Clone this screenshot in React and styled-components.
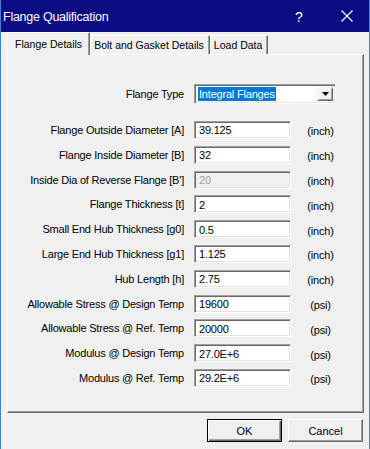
import React from 'react'
import styled, {createGlobalStyle} from 'styled-components'

const GlobalStyle = createGlobalStyle`
  html, body {
    margin: 0;
    padding: 0;
    background: #f0f0f0;
  }
  body {
    font-family: "Liberation Sans", Arial, sans-serif;
    font-size: 11px;
    color: #000;
  }
`

const FIELDS = [
  {label: 'Flange Outside Diameter [A]', value: '39.125', unit: '(inch)'},
  {label: 'Flange Inside Diameter [B]', value: '32', unit: '(inch)'},
  {label: "Inside Dia of Reverse Flange [B']", value: '20', unit: '(inch)', disabled: true},
  {label: 'Flange Thickness [t]', value: '2', unit: '(inch)'},
  {label: 'Small End Hub Thickness [g0]', value: '0.5', unit: '(inch)'},
  {label: 'Large End Hub Thickness [g1]', value: '1.125', unit: '(inch)'},
  {label: 'Hub Length [h]', value: '2.75', unit: '(inch)'},
  {label: 'Allowable Stress @ Design Temp', value: '19600', unit: '(psi)'},
  {label: 'Allowable Stress @ Ref. Temp', value: '20000', unit: '(psi)'},
  {label: 'Modulus @ Design Temp', value: '27.0E+6', unit: '(psi)'},
  {label: 'Modulus @ Ref. Temp', value: '29.2E+6', unit: '(psi)'},
]

const TABS = ['Flange Details', 'Bolt and Gasket Details', 'Load Data']

const App = () => {
  return (
    <>
      <GlobalStyle />
      <Window>
        <TitleBar>
          <Title>Flange Qualification</Title>
          <Help>?</Help>
          <Close>
            <svg width="12" height="12" viewBox="0 0 12 12">
              <path d="M0.5 0.5 L11.5 11.5 M11.5 0.5 L0.5 11.5" stroke="#fff" strokeWidth="1.2" fill="none" />
            </svg>
          </Close>
        </TitleBar>

        <Body>
          <TabStrip>
            {TABS.map((t, i) => (
              <Tab key={t} $active={i === 0}>{t}</Tab>
            ))}
          </TabStrip>

          <Panel>
            <TypeRow>
              <Label>Flange Type</Label>
              <Combo>
                <ComboText><Selected>Integral Flanges</Selected></ComboText>
                <ComboButton>
                  <svg width="7" height="4" viewBox="0 0 7 4">
                    <path d="M0 0 H7 L3.5 4 Z" fill="#000" />
                  </svg>
                </ComboButton>
              </Combo>
            </TypeRow>

            <FieldGrid>
              {FIELDS.map(f => (
                <React.Fragment key={f.label}>
                  <Label>{f.label}</Label>
                  <Field $disabled={f.disabled}>{f.value}</Field>
                  <Unit>{f.unit}</Unit>
                </React.Fragment>
              ))}
            </FieldGrid>
          </Panel>

          <Footer>
            <Button $default>OK</Button>
            <Button>Cancel</Button>
          </Footer>
        </Body>
      </Window>
    </>
  )
}

export default App

const Window = styled.div`
  width: 370px;
  height: 449px;
  box-sizing: border-box;
  border-left: 1px solid #3a84d6;
  border-right: 1px solid #3a84d6;
  background: #f0f0f0;
  display: flex;
  flex-direction: column;
  overflow: hidden;
`

const TitleBar = styled.div`
  height: 32px;
  flex-shrink: 0;
  background: #0a0a82;
  color: #fff;
  display: flex;
  align-items: center;
  padding-left: 3px;
  margin: 0 -1px;
`

const Title = styled.div`
  flex: 1;
  font-size: 12.5px;
  letter-spacing: -0.25px;
  padding-top: 1px;
`

const Help = styled.div`
  width: 10px;
  font-size: 14px;
  margin-right: 37px;
  padding-top: 1px;
  text-align: center;
`

const Close = styled.div`
  width: 12px;
  height: 12px;
  margin-right: 17px;
  display: flex;
`

const Body = styled.div`
  flex: 1;
  display: flex;
  flex-direction: column;
  padding: 0 5px 0 6px;
`

const TabStrip = styled.div`
  height: 22px;
  display: flex;
  align-items: flex-start;
  margin-left: -1px;
`

const Tab = styled.div`
  position: relative;
  z-index: 2;
  box-sizing: border-box;
  background: #f0f0f0;
  white-space: nowrap;
  font-size: 10.5px;
  display: flex;
  align-items: center;
  border-top: 1px solid #fff;
  border-left: 1px solid #fff;
  border-right: 1px solid #696969;
  box-shadow: inset -1px 0 0 #a0a0a0;
  height: ${p => (p.$active ? '23px' : '19px')};
  margin-top: ${p => (p.$active ? '0' : '3px')};
  padding: ${p => (p.$active ? '0 7px 1px 8px' : '0 5px 0 3px')};
`

const Panel = styled.div`
  height: 359px;
  box-sizing: border-box;
  border-top: 1px solid #fff;
  border-left: 1px solid #fff;
  border-right: 1px solid #696969;
  border-bottom: 1px solid #696969;
  box-shadow: inset -1px -1px 0 #a0a0a0;
  padding-top: 29px;
`

const TypeRow = styled.div`
  display: grid;
  grid-template-columns: 186px 156px;
  align-items: center;
  height: 20px;
  margin-bottom: 13.6px;
`

const FieldGrid = styled.div`
  display: grid;
  grid-template-columns: 186px 97px 59px;
  grid-auto-rows: 24.8px;
  align-items: center;
`

const Label = styled.div`
  text-align: right;
  padding-right: 10px;
  white-space: nowrap;
  font-size: 11px;
  letter-spacing: -0.2px;
`

const sunken = `
  box-sizing: border-box;
  border-top: 1px solid #a0a0a0;
  border-left: 1px solid #a0a0a0;
  border-right: 1px solid #fff;
  border-bottom: 1px solid #fff;
  box-shadow: inset 1px 1px 0 #696969, inset -1px -1px 0 #e3e3e3;
`

const Field = styled.div`
  ${sunken}
  height: 18px;
  padding: 1px 0 0 4px;
  display: flex;
  align-items: center;
  font-size: 11px;
  letter-spacing: -0.2px;
  background: ${p => (p.$disabled ? '#f0f0f0' : '#fff')};
  color: ${p => (p.$disabled ? '#a0a0a0' : '#000')};
`

const Unit = styled.div`
  text-align: center;
  padding-top: 3px;
  font-size: 11px;
  letter-spacing: -0.2px;
`

const Combo = styled.div`
  ${sunken}
  width: 142px;
  height: 20px;
  background: #fff;
  display: flex;
  align-items: stretch;
  padding: 2px;
`

const ComboText = styled.div`
  flex: 1;
  display: flex;
  align-items: center;
  padding-left: 1px;
`

const Selected = styled.span`
  background: #0078d7;
  color: #fff;
  font-size: 11px;
  letter-spacing: -0.2px;
  line-height: 14px;
  padding: 0 1px;
`

const ComboButton = styled.div`
  width: 16px;
  box-sizing: border-box;
  background: #f0f0f0;
  border-top: 1px solid #f0f0f0;
  border-left: 1px solid #f0f0f0;
  border-right: 1px solid #696969;
  border-bottom: 1px solid #696969;
  box-shadow: inset 1px 1px 0 #fff, inset -1px -1px 0 #a0a0a0;
  display: flex;
  align-items: center;
  justify-content: center;
`

const Footer = styled.div`
  display: flex;
  justify-content: flex-end;
  gap: 6px;
  padding: 6px 1px 0 0;
`

const Button = styled.div`
  width: 75px;
  height: 23px;
  box-sizing: border-box;
  background: #f0f0f0;
  display: flex;
  align-items: center;
  justify-content: center;
  font-size: 11px;
  border-top: 1px solid ${p => (p.$default ? '#000' : '#fff')};
  border-left: 1px solid ${p => (p.$default ? '#000' : '#fff')};
  border-right: 1px solid ${p => (p.$default ? '#000' : '#696969')};
  border-bottom: 1px solid ${p => (p.$default ? '#000' : '#696969')};
  box-shadow: ${p =>
    p.$default
      ? 'inset 1px 1px 0 #fff, inset -1px -1px 0 #696969, inset -2px -2px 0 #a0a0a0'
      : 'inset -1px -1px 0 #a0a0a0'};
`
